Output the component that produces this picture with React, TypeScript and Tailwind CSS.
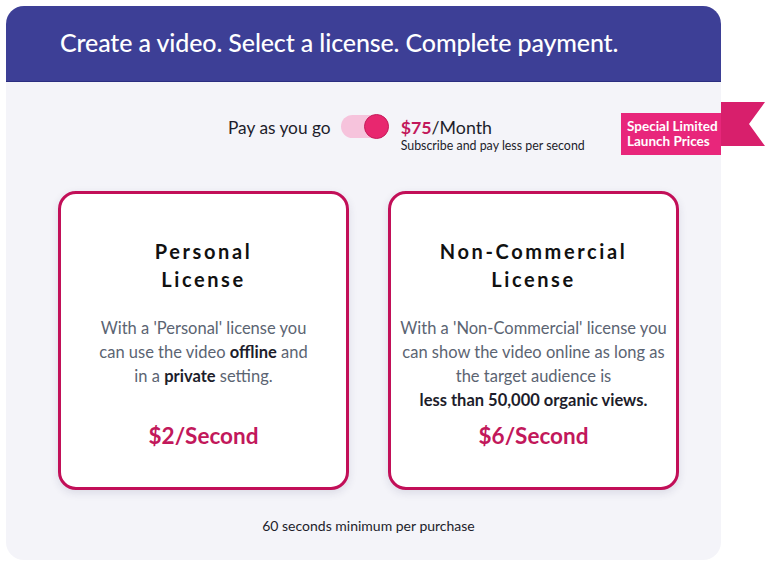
import React from 'react';

const Ribbon = () => {
  return (
    <div className="absolute left-[621px] top-[102px] h-[54px] w-[145px]">
      <svg className="absolute inset-0" height="54" viewBox="0 0 145 54" width="145">
        <polygon fill="#d81f6c" points="100,0 144,0 128,22 144,44 100,44" />
        <polygon fill="#e8267b" points="0,11 100,11 100,53 0,53" />
      </svg>
      <div className="absolute left-[6px] top-[17px] text-[13.5px] font-bold leading-[15px] text-white">
        Special Limited
        <br />
        Launch Prices
      </div>
    </div>
  );
};

const Card = ({ title, children, price }: { title: React.ReactNode; children: React.ReactNode; price: string }) => {
  return (
    <div className="flex h-[299px] w-[291px] flex-col items-center rounded-[18px] border-[3px] border-[#c20f58] bg-white px-1 pb-[37px] pt-[43px] text-center shadow-[0_3px_8px_rgba(40,40,90,0.12)]">
      <h2 className="text-[20px] font-bold leading-[28px] tracking-[0.13em] text-[#111]">{title}</h2>
      <p className="mt-[23px] text-[16.5px] leading-[24px] text-[#5b6472]">{children}</p>
      <div className="mt-auto text-[22.5px] font-bold leading-[28px] text-[#c2185b]">{price}</div>
    </div>
  );
};

export default function App() {
  return (
    <div className="relative min-h-[569px] bg-white pl-[6px] pt-[6px] font-['Lato',sans-serif]">
      <div className="w-[715px]">
        <header className="flex h-[76px] items-center rounded-t-[18px] border-b border-[#2b2d80] bg-[#3d3f96] pb-[2px] pl-[54px]">
          <h1 className="text-[25px] font-medium tracking-[-0.005em] text-white">
            Create a video. Select a license. Complete payment.
          </h1>
        </header>
        <main className="h-[478px] rounded-b-[18px] bg-[#f4f4f9] pl-[52px] pt-[33px]">
          <div className="ml-[170px] flex h-[40px] items-start">
            <span className="text-[17.3px] leading-[25px] text-[#1d1d2b]">Pay as you go</span>
            <div className="relative ml-[10px] h-[23px] w-[48px] rounded-full bg-[#f6c3dc]">
              <div className="absolute right-0 top-[-1px] h-[25px] w-[25px] rounded-full border border-[#c51d5b] bg-[#e8276f]" />
            </div>
            <div className="ml-[12px] mt-[2px] flex flex-col">
              <span className="text-[17.8px] leading-[21px] text-[#1d1d2b]">
                <b className="font-bold text-[#c2185b]">$75</b>/Month
              </span>
              <span className="mt-px text-[12.4px] leading-[14px] text-[#1d1d2b]">Subscribe and pay less per second</span>
            </div>
          </div>
          <div className="mt-[36px] flex gap-[39px]">
            <Card
              price="$2/Second"
              title={
                <>
                  Personal
                  <br />
                  License
                </>
              }
            >
              With a 'Personal' license you
              <br />
              can use the video <b className="font-bold text-[#1d1d2b]">offline</b> and
              <br />
              in a <b className="font-bold text-[#1d1d2b]">private</b> setting.
            </Card>
            <Card
              price="$6/Second"
              title={
                <>
                  Non-Commercial
                  <br />
                  License
                </>
              }
            >
              With a 'Non-Commercial' license you
              <br />
              can show the video online as long as
              <br />
              the target audience is
              <br />
              <b className="font-bold text-[#1d1d2b]">less than 50,000 organic views.</b>
            </Card>
          </div>
          <p className="mt-[27px] w-[621px] text-center text-[14px] leading-[18px] text-[#1d1d2b]">
            60 seconds minimum per purchase
          </p>
        </main>
      </div>
      <Ribbon />
    </div>
  );
}
